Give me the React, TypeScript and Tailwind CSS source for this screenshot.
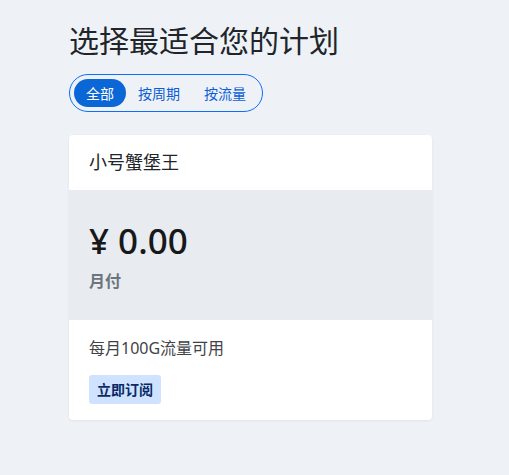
export default function App() {
  const font = { fontFamily: '"Noto Sans", "Noto Sans CJK SC", sans-serif' };
  return (
    <div className="min-h-[475px] w-full bg-[#eef2f7] pl-[69px] pt-[21px]" style={font}>
      <h1 className="text-[30px] leading-[40px] text-[#212529] font-normal">选择最适合您的计划</h1>
      <div className="mt-[13px] inline-flex rounded-full border border-[#0d6efd] p-[4px]">
        <button className="h-[28px] rounded-full bg-[#0b66d6] px-[12px] text-[14px] text-white">全部</button>
        <button className="h-[28px] rounded-full px-[12px] text-[14px] text-[#0b5ed7]">按周期</button>
        <button className="h-[28px] rounded-full px-[12px] text-[14px] text-[#0b5ed7]">按流量</button>
      </div>
      <div className="mt-[23px] w-[363px] overflow-hidden rounded-[4px] bg-white shadow-[0_1px_3px_rgba(0,0,0,0.06)]">
        <div className="flex h-[55px] items-center px-[20px] text-[18px] text-[#212529]">小号蟹堡王</div>
        <div className="h-[130px] bg-[#e8ebef] px-[20px] pt-[29px]">
          <div className="text-[35px] font-medium leading-[44px] text-[#16181b]">¥ 0.00</div>
          <div className="mt-[6px] text-[16px] font-bold leading-[24px] text-[#6c757d]">月付</div>
        </div>
        <div className="px-[20px] pt-[16px] pb-[16px]">
          <div className="text-[16px] leading-[24px] text-[#3f4347]">每月100G流量可用</div>
          <button className="mt-[15px] h-[29px] rounded-[3px] bg-[#cfe2ff] px-[8px] text-[14px] font-bold text-[#0a2a66]">立即订阅</button>
        </div>
      </div>
    </div>
  );
}
